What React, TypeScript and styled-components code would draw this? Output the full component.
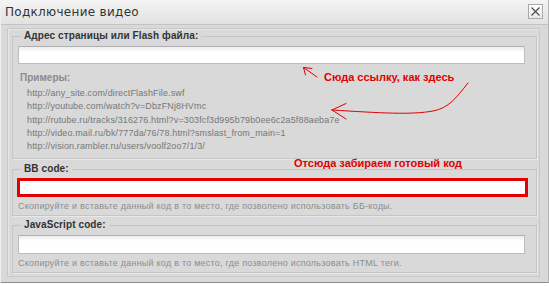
import React from "react";
import styled, { createGlobalStyle } from "styled-components";

const Global = createGlobalStyle`
  html, body { margin: 0; padding: 0; background: #ffffff; }
  body { font-family: "Liberation Sans", Arial, sans-serif; }
  * { box-sizing: border-box; }
`;

const VERDANA = `"DejaVu Sans", Verdana, sans-serif`;
const TAHOMA = `"Liberation Sans", Arial, sans-serif`;

const Dialog = styled.div`
  position: relative;
  width: 549px;
  height: 283px;
  background: #d9d9d9;
  border-left: 1px solid #efefef;
  border-right: 1px solid #b5b5b5;
  border-bottom: 1px solid #8c8c8c;
  display: flex;
  flex-direction: column;
`;

const TitleBar = styled.div`
  height: 25px;
  flex: none;
  display: flex;
  align-items: center;
  justify-content: space-between;
  padding: 0 5px 0 4px;
  background: linear-gradient(#f4f4f4, #e2e2e2);
  border-bottom: 1px solid #c3c3c3;
`;

const Title = styled.div`
  font-family: ${VERDANA};
  font-size: 12px;
  letter-spacing: 0.3px;
  color: #333;
  margin-top: -1px;
`;

const CloseButton = styled.div`
  width: 15px;
  height: 15px;
  margin-top: -2px;
  border: 1px solid #a9a9a9;
  background: linear-gradient(#ffffff, #e9e9e9);
  display: flex;
  align-items: center;
  justify-content: center;
`;

const Body = styled.div`
  flex: 1;
  padding: 3px 8px 6px 6px;
  display: flex;
`;

const Panel = styled.div`
  flex: 1;
  border: 1px solid #c9c9c9;
  box-shadow: inset 1px 1px 0 #e6e6e6;
  padding: 0 2px 3px 4px;
  display: flex;
  flex-direction: column;
`;

const Group = styled.fieldset<{ $gap?: number }>`
  margin: ${(p) => p.$gap ?? 0}px 0 0 0;
  padding: 0 11px ${(p) => (p.$gap ? 2 : 5)}px 5px;
  border: 1px solid #c5c5c5;
  box-shadow: 1px 1px 0 #e8e8e8;
  min-width: 0;
`;

const Legend = styled.legend`
  font-family: ${TAHOMA};
  font-size: 10px;
  font-weight: bold;
  letter-spacing: 0.1px;
  line-height: 14px;
  color: #333;
  padding: 0 3px;
  margin-left: 3px;
`;

const Field = styled.div<{ $highlight?: boolean; $h?: number }>`
  margin-top: 3px;
  height: ${(p) => p.$h ?? 18}px;
  background: linear-gradient(#ececec, #ffffff 5px);
  border: 1px solid #bdbdbd;
  border-top-color: #b0b0b0;
  ${(p) =>
    p.$highlight &&
    `
    background: #ffffff;
    border: 3px solid #e20000;
    margin-left: -1px;
    margin-right: -3px;
    height: 19px;
    margin-top: 2px;
  `}
`;

const ExamplesTitle = styled.div`
  margin-top: 7px;
  margin-left: 2px;
  font-family: ${TAHOMA};
  font-size: 10px;
  font-weight: bold;
  line-height: 14px;
  color: #8b8b8b;
`;

const ExampleList = styled.div`
  margin-top: 2px;
  margin-left: 9px;
  display: flex;
  flex-direction: column;
`;

const Example = styled.div`
  font-family: ${TAHOMA};
  font-size: 9px;
  letter-spacing: 0.13px;
  line-height: 13.3px;
  color: #777777;
  white-space: nowrap;
`;

const Hint = styled.div`
  margin-top: 3px;
  font-family: ${TAHOMA};
  font-size: 9px;
  line-height: 13px;
  color: #8e8e8e;
  letter-spacing: 0.24px;
  white-space: nowrap;
`;

const Note = styled.div<{ $x: number; $y: number }>`
  position: absolute;
  left: ${(p) => p.$x}px;
  top: ${(p) => p.$y}px;
  font-family: "Liberation Sans", Arial, sans-serif;
  font-size: 11px;
  font-weight: bold;
  line-height: 13px;
  color: #e00000;
  white-space: nowrap;
`;

const Overlay = styled.svg`
  position: absolute;
  left: 0;
  top: 0;
  pointer-events: none;
`;

const examples = [
  "http://any_site.com/directFlashFile.swf",
  "http://youtube.com/watch?v=DbzFNj8HVmc",
  "http://rutube.ru/tracks/316276.html?v=303fcf3d995b79b0ee6c2a5f88aeba7e",
  "http://video.mail.ru/bk/777da/76/78.html?smslast_from_main=1",
  "http://vision.rambler.ru/users/voolf2oo7/1/3/",
];

export default function App() {
  return (
    <>
      <Global />
      <Dialog>
        <TitleBar>
          <Title>Подключение видео</Title>
          <CloseButton>
            <svg width="11" height="11" viewBox="0 0 11 11">
              <path d="M1.5 1.5 L9.5 9.5 M9.5 1.5 L1.5 9.5" stroke="#4a4a4a" strokeWidth="1.1" fill="none" />
            </svg>
          </CloseButton>
        </TitleBar>
        <Body>
          <Panel>
            <Group>
              <Legend>Адрес страницы или Flash файла:</Legend>
              <Field />
              <ExamplesTitle>Примеры:</ExamplesTitle>
              <ExampleList>
                {examples.map((e) => (
                  <Example key={e}>{e}</Example>
                ))}
              </ExampleList>
            </Group>
            <Group $gap={3}>
              <Legend>BB code:</Legend>
              <Field $highlight />
              <Hint>Скопируйте и вставьте данный код в то место, где позволено использовать ББ-коды.</Hint>
            </Group>
            <Group $gap={2}>
              <Legend>JavaScript code:</Legend>
              <Field $h={19} />
              <Hint>Скопируйте и вставьте данный код в то место, где позволено использовать HTML теги.</Hint>
            </Group>
          </Panel>
        </Body>
        <Overlay width="549" height="286" viewBox="0 0 549 286">
          <g stroke="#e00000" strokeWidth="1" fill="none" strokeLinecap="round">
            <path d="M302.5 67.5 L316 77" />
            <path d="M302.5 67.5 L311 68.5 M302.5 67.5 L304.5 75" />
            <path d="M467 83 C455 98 448 108 432 111 C410 115 380 113 331 110" />
            <path d="M331 110 L345 103.5 M331 110 L345 119" />
          </g>
        </Overlay>
        <Note $x={323} $y={71}>Сюда ссылку, как здесь</Note>
        <Note $x={293} $y={157}>Отсюда забираем готовый код</Note>
      </Dialog>
    </>
  );
}
